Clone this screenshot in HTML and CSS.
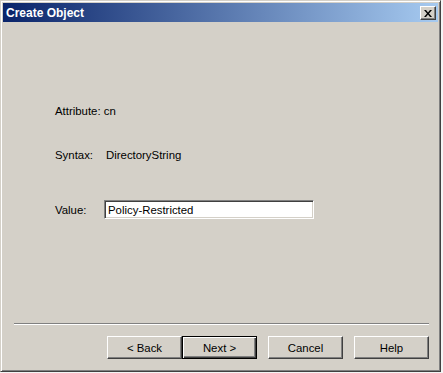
FILE: index.html
```html
<!DOCTYPE html>
<html lang="en">
<head>
  <meta charset="utf-8">
  <title>Create Object</title>
  <link rel="stylesheet" href="styles.css">
</head>
<body>
  <div class="window">
    <div class="titlebar">
      <span class="title">Create Object</span>
      <button class="close" aria-label="Close">
        <svg width="8" height="7" viewBox="0 0 8 7">
          <path d="M0 0h2l2 2.5L6 0h2L5 3.5 8 7H6L4 4.5 2 7H0l3-3.5z" fill="#000"/>
        </svg>
      </button>
    </div>

    <div class="content">
      <div class="row attr">Attribute: cn</div>
      <div class="row syntax">
        <span class="label">Syntax:</span>
        <span>DirectoryString</span>
      </div>
      <div class="row value">
        <span class="label">Value:</span>
        <input class="field" type="text" value="Policy-Restricted">
      </div>
    </div>

    <div class="footer">
      <hr class="sep">
      <div class="buttons">
        <button class="btn">&lt; Back</button>
        <button class="btn default">Next &gt;</button>
        <button class="btn gap">Cancel</button>
        <button class="btn gap">Help</button>
      </div>
    </div>
  </div>
</body>
</html>
```

FILE: styles.css
```css
* {
  margin: 0;
  padding: 0;
  box-sizing: border-box;
}

body {
  background: #f4f4f4;
  font-family: "Liberation Sans", Tahoma, sans-serif;
  font-size: 11.4px;
  color: #000;
  width: 443px;
  height: 373px;
  overflow: hidden;
}

.window {
  width: 441px;
  height: 372px;
  background: #d4d0c8;
  border: 1px solid;
  border-color: #d4d0c8 #404040 #404040 #d4d0c8;
  box-shadow: inset 1px 1px 0 #fff, inset -1px -1px 0 #808080;
  padding: 2px;
  display: flex;
  flex-direction: column;
}

.titlebar {
  height: 19px;
  background: linear-gradient(to right, #0a246a, #a6caf0);
  display: flex;
  align-items: center;
  justify-content: space-between;
  padding: 1px 2px 0 3px;
}

.title {
  color: #fff;
  font-weight: bold;
  font-size: 12px;
}

.close {
  width: 16px;
  height: 14px;
  background: #d4d0c8;
  border: 1px solid;
  border-color: #fff #404040 #404040 #fff;
  box-shadow: inset -1px -1px 0 #808080;
  display: flex;
  align-items: center;
  justify-content: center;
}

.content {
  flex: 1;
  padding: 83px 0 0 52px;
}

.row {
  display: flex;
  align-items: center;
}

.label {
  width: 49px;
}

.syntax {
  margin-top: 32px;
}

.syntax .label {
  width: 51px;
}

.value {
  margin-top: 39px;
}

.field {
  width: 210px;
  height: 19px;
  font: inherit;
  padding: 0 3px;
  background: #fff;
  border: 1px solid;
  border-color: #808080 #fff #fff #808080;
  box-shadow: inset 1px 1px 0 #404040, inset -1px -1px 0 #d4d0c8;
  outline: none;
}

.footer {
  padding: 0 9px 10px 11px;
}

.sep {
  border: 0;
  border-top: 1px solid #808080;
  border-bottom: 1px solid #fff;
  margin-bottom: 11px;
}

.buttons {
  display: flex;
  justify-content: flex-end;
}

.btn {
  width: 75px;
  height: 23px;
  font: inherit;
  background: #d4d0c8;
  border: 1px solid;
  border-color: #fff #404040 #404040 #fff;
  box-shadow: inset -1px -1px 0 #808080;
}

.btn.default {
  border: 1px solid #000;
  box-shadow: inset 1px 1px 0 #fff, inset -1px -1px 0 #404040, inset -2px -2px 0 #808080;
}

.btn.gap {
  margin-left: 11px;
}
```
